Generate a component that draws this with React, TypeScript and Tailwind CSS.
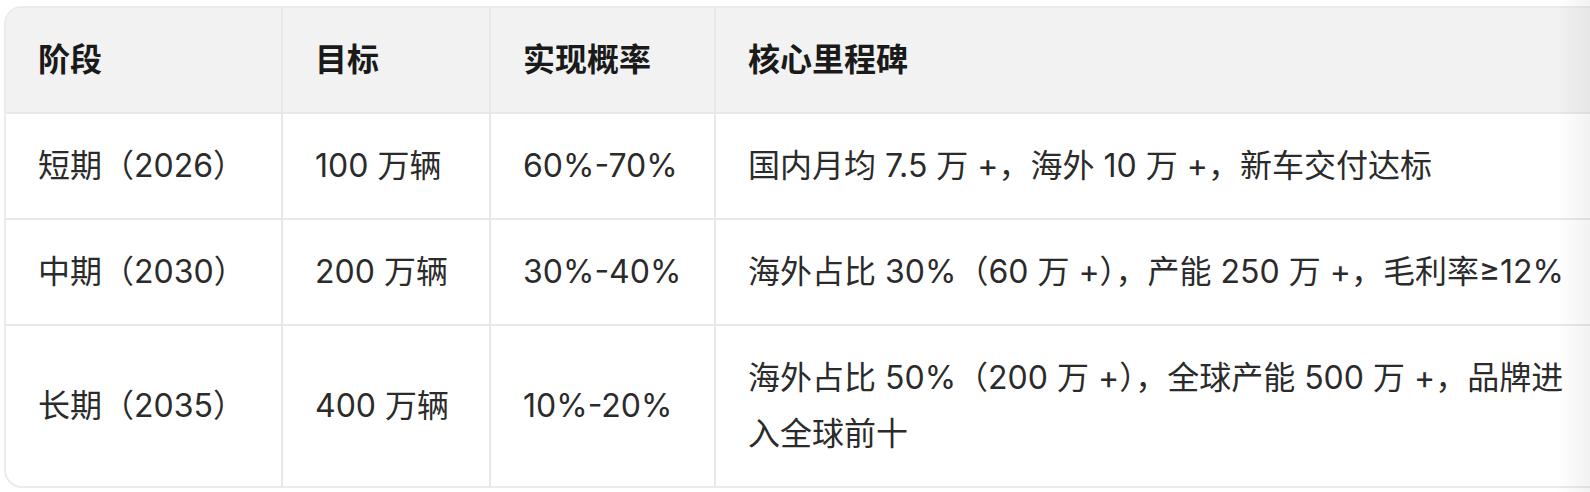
import React from "react"

const rows = [
  ["短期（2026）", "100 万辆", "60%-70%", "国内月均 7.5 万 +，海外 10 万 +，新车交付达标"],
  ["中期（2030）", "200 万辆", "30%-40%", "海外占比 30%（60 万 +），产能 250 万 +，毛利率≥12%"],
  ["长期（2035）", "400 万辆", "10%-20%", "海外占比 50%（200 万 +），全球产能 500 万 +，品牌进入全球前十"],
]

const headers = ["阶段", "目标", "实现概率", "核心里程碑"]

export default function App() {
  return (
    <div
      className="relative h-[492px] w-[1590px] overflow-hidden bg-white pl-[4px] pt-[6px]"
      style={{ fontFamily: 'Inter, "Noto Sans CJK SC", sans-serif' }}
    >
      <div className="w-[1600px] overflow-hidden rounded-l-[18px] border-2 border-r-0 border-[#ebebeb]">
        <div className="grid grid-cols-[277px_208px_225px_890px]">
          {headers.map((h, i) => (
            <div
              key={h}
              className={`flex items-center bg-[#f2f2f2] px-8 py-6 text-[32px] font-bold leading-[56px] text-[#1a1a1a] border-b-2 border-[#e8e8e8] ${i < 3 ? "border-r-2" : ""}`}
            >
              {h}
            </div>
          ))}
          {rows.map((row, r) =>
            row.map((cell, i) => (
              <div
                key={r + "-" + i}
                className={`flex items-center px-8 py-6 text-[32px] leading-[56px] text-[#2b2b2b] border-[#e8e8e8] ${i < 3 ? "border-r-2" : ""} ${r < 2 ? "border-b-2" : ""}`}
              >
                {i === 3 ? <span className="block w-[826px]">{cell}</span> : cell}
              </div>
            ))
          )}
        </div>
      </div>
      {/* scroll fade on the right edge */}
      <div className="pointer-events-none absolute right-0 top-0 h-full w-[34px] bg-gradient-to-r from-transparent to-black/[0.05]" />
    </div>
  )
}
